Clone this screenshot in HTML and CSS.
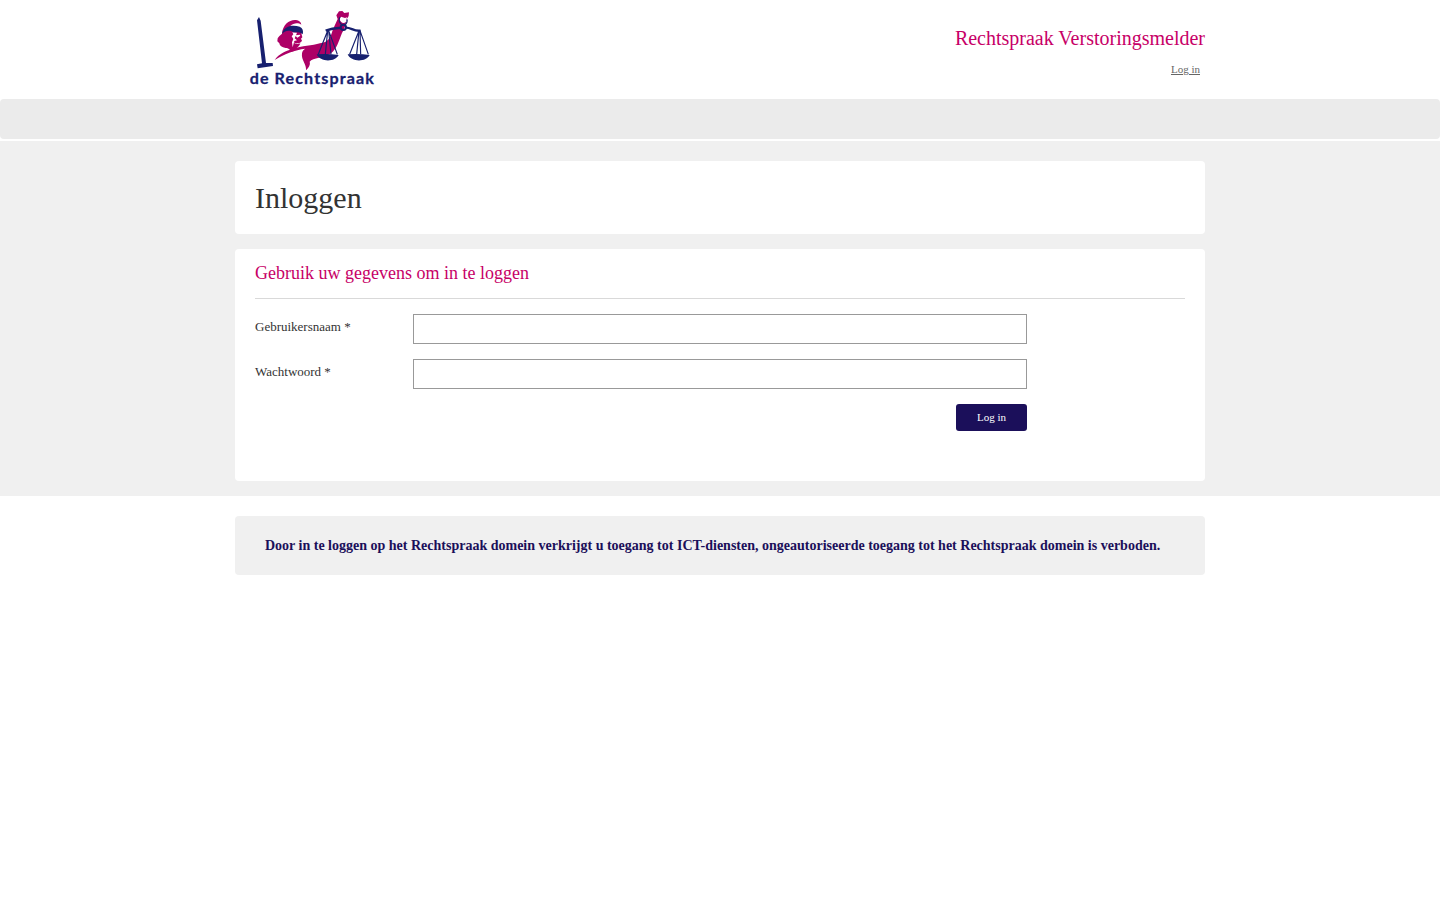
FILE: index.html
```html
<!DOCTYPE html>
<html lang="nl">
<head>
<meta charset="utf-8">
<title>Inloggen - Rechtspraak Verstoringsmelder</title>
<link rel="stylesheet" href="styles.css">
</head>
<body>
<header class="header container">
  <svg class="logo" viewBox="0 0 450 285" role="img" aria-label="de Rechtspraak">
    <g class="logo-magenta">
      <path d="M126 101C128 73 149 58 168 60C177 61 183 66 184 74C174 67 160 69 151 78C168 78 180 82 187 94L184 100L187 112L183 116L186 122C180 132 167 131 160 126C164 131 172 134 181 130C178 141 167 144 165 152L151 156C152 149 145 144 137 144C125 143 119 137 118 130L112 124L113 115C116 108 122 105 126 101Z"/>
      <path d="M104 180C117 161 139 152 158 147C185 137 217 137 240 130C264 127 272 114 278 90L293 57L289 46L297 34L307 33L313 39L327 37L326 48L320 58L313 86L306 99C296 123 291 146 273 160C252 173 219 174 209 185C212 195 205 204 198 211C200 193 183 180 186 160C187 153 191 149 196 146C164 150 136 160 104 180Z"/>
    </g>
    <path class="logo-white" d="M157 97L171 98L168 106L179 104L181 107L172 113L167 108L164 115L171 121L163 123L158 142L156 127L160 117L155 109L160 103ZM303 50A8 8 0 1 0 318 65L321 52L315 54Z"/>
    <g class="logo-navy">
      <path d="M57 51L62 62L78 189L98 189L99 198L53 205L51 193L66 190L51 61Z"/>
      <path d="M126 101C131 78 158 73 179 80C188 84 191 93 188 103C181 96 169 97 160 97C148 89 136 92 126 101Z"/>
      <path d="M230 163Q263 160 296 165C286 187 240 187 230 163ZM323 163Q356 160 389 165C379 187 333 187 323 163Z"/>
    </g>
    <g class="logo-lines">
      <path class="beam" d="M257 92Q279 83 301 84M318 83C334 83 342 95 362 92"/>
      <circle class="ring" cx="310" cy="82" r="8"/>
      <path class="thin" d="M300 51C294 60 299 70 306 74M315 75C320 70 323 65 321 58"/>
      <path d="M263 92L235 163M263 92L256 163M266 92L292 163M266 92L273 163M357 92L329 163M357 92L350 163M360 92L385 163M360 92L362 163" class="thin"/>
    </g>
    <text class="logo-text" x="29" y="251" textLength="376" lengthAdjust="spacingAndGlyphs">de Rechtspraak</text>
  </svg>
  <div class="header-side">
    <div class="site-name">Rechtspraak Verstoringsmelder</div>
    <a class="login-link" href="#">Log in</a>
  </div>
</header>
<nav class="navbar"></nav>
<main class="main">
  <div class="container">
    <section class="card title-card"><h1 class="title">Inloggen</h1></section>
    <section class="card form-card">
      <h2 class="subtitle">Gebruik uw gegevens om in te loggen</h2>
      <form class="form">
        <label class="label" for="user">Gebruikersnaam *</label>
        <input class="input" id="user" type="text">
        <label class="label" for="pass">Wachtwoord *</label>
        <input class="input" id="pass" type="password">
        <button class="button" type="button">Log in</button>
      </form>
    </section>
  </div>
</main>
<footer class="container notice">Door in te loggen op het Rechtspraak domein verkrijgt u toegang tot ICT-diensten, ongeautoriseerde toegang tot het Rechtspraak domein is verboden.</footer>
</body>
</html>
```
FILE: styles.css
```css
* { box-sizing: border-box; }
body { margin: 0; background: #fff; color: #333; font-family: "Liberation Serif", "Times New Roman", serif; font-size: 13px; }
.container { width: 970px; margin: 0 auto; }
.header { display: flex; justify-content: space-between; height: 99px; }
.logo { width: 150px; height: 95px; margin-left: 5px; }
.logo-magenta { fill: #ad0066; }
.logo-navy { fill: #17206f; }
.logo-white { fill: #fff; }
.logo-lines { fill: none; stroke: #17206f; }
.beam { stroke-width: 7; }
.ring { stroke-width: 6; }
.thin { stroke-width: 3.5; }
.logo-text { fill: #17206f; stroke: #17206f; stroke-width: 0.8; font-family: Lato, sans-serif; font-size: 43px; font-weight: 700; letter-spacing: 3px; }
.header-side { display: flex; flex-direction: column; align-items: flex-end; padding-top: 26px; }
.site-name { color: #c70067; font-size: 20px; line-height: 24px; }
.login-link { color: #666; font-size: 11px; line-height: 14px; margin: 12px 5px 0 0; }
.navbar { height: 40px; margin-bottom: 2px; background: #ebebeb; border-radius: 4px; }
.main { height: 355px; padding-top: 20px; background: #f0f0f0; }
.card { background: #fff; border-radius: 4px; padding: 0 20px; }
.title-card { height: 73px; margin-bottom: 15px; padding-top: 20px; }
.title { margin: 0; font-size: 30px; font-weight: 400; line-height: 33px; }
.form-card { height: 232px; }
.subtitle { margin: 0 0 15px; height: 50px; padding-top: 14px; border-bottom: 1px solid #d9d9d9; color: #c70067; font-size: 18px; font-weight: 400; line-height: 20px; }
.form { display: grid; grid-template-columns: 158px 614px; grid-template-rows: 30px 30px 27px; row-gap: 15px; }
.label { padding-top: 4px; line-height: 18px; }
.input { width: 614px; height: 30px; border: 1px solid #999; background: #fff; padding: 4px; }
.button { grid-column: 2; justify-self: end; width: 71px; height: 27px; padding: 0 0 2px; border: 0; border-radius: 3px; background: #1b0f5a; color: #fff; font-family: inherit; font-size: 11px; }
.notice { height: 59px; margin-top: 20px; padding: 20px 30px; border-radius: 4px; background: #f0f0f0; color: #1b0f5a; font-size: 14px; font-weight: 700; line-height: 19px; }
```
